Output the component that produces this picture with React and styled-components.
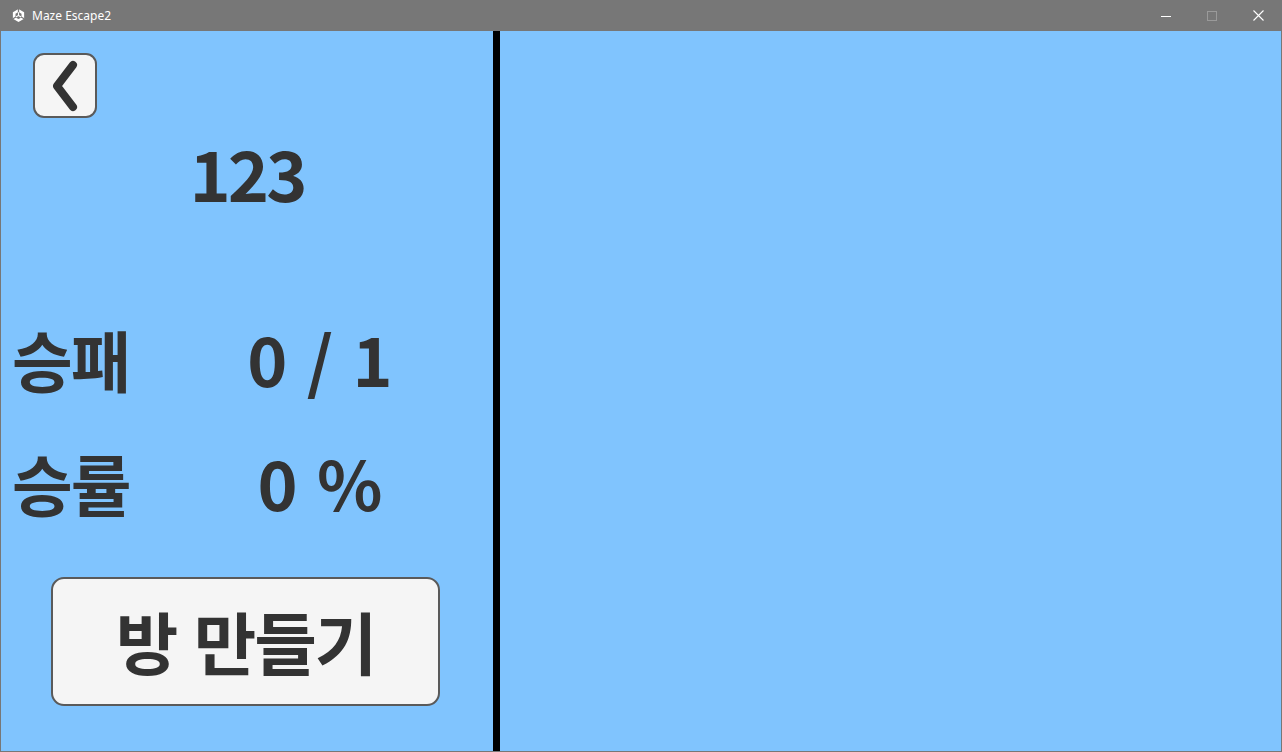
import React from 'react';
import styled, { createGlobalStyle } from 'styled-components';

const GlobalStyle = createGlobalStyle`
  html, body {
    margin: 0;
    padding: 0;
    width: 1282px;
    height: 752px;
    overflow: hidden;
  }
  * { box-sizing: border-box; }
`;

const Window = styled.div`
  width: 1282px;
  height: 752px;
  display: flex;
  flex-direction: column;
  background: #777777;
  padding: 0 1px 1px 1px;
`;

const TitleBar = styled.div`
  height: 31px;
  flex-shrink: 0;
  display: flex;
  align-items: center;
  padding-left: 10px;
  color: #ffffff;
  font-family: "Noto Sans", "Liberation Sans", sans-serif;
  font-size: 12px;
`;

const TitleText = styled.span`
  margin-left: 6px;
  flex: 1;
`;

const Controls = styled.div`
  display: flex;
  height: 100%;
`;

const ControlButton = styled.div`
  width: 46px;
  height: 100%;
  display: flex;
  align-items: center;
  justify-content: center;
`;

const Content = styled.div`
  flex: 1;
  min-height: 0;
  display: flex;
  background: #80c4fe;
`;

const LeftPanel = styled.div`
  width: 492px;
  display: flex;
  flex-direction: column;
  padding-top: 22px;
  color: #333333;
  font-family: "Noto Sans CJK KR", "Noto Sans", sans-serif;
  font-weight: 700;
  & > * { flex-shrink: 0; }
`;

const Divider = styled.div`
  width: 7px;
  background: #000000;
`;

const RightPanel = styled.div`
  flex: 1;
`;

const BackButton = styled.div`
  width: 64px;
  height: 65px;
  margin-left: 32px;
  border: 2px solid #5a5a5a;
  border-radius: 11px;
  background: #f5f5f5;
  display: flex;
  align-items: center;
  justify-content: center;
`;

const Score = styled.div`
  margin-top: 14px;
  height: 80px;
  line-height: 80px;
  font-size: 70px;
  letter-spacing: -3px;
  text-align: center;
`;

const StatRow = styled.div`
  display: grid;
  grid-template-columns: 139px 338px;
  align-items: center;
  height: 80px;
  padding-left: 11px;
  margin-top: ${p => p.$gap}px;
`;

const Label = styled.div`
  font-size: 66px;
  line-height: 80px;
  letter-spacing: -2px;
`;

const Value = styled.div`
  font-size: 68px;
  line-height: 80px;
  text-align: center;
  white-space: pre;
  word-spacing: 4px;
`;

const CreateButton = styled.div`
  width: 389px;
  height: 129px;
  margin-top: 55px;
  margin-left: 50px;
  border: 2px solid #5a5a5a;
  border-radius: 13px;
  background: #f5f5f5;
  display: flex;
  align-items: center;
  justify-content: center;
  font-size: 68px;
  letter-spacing: -2px;
  word-spacing: 4px;
  padding-bottom: 2px;
`;

function UnityLogo() {
  return (
    <svg width="15" height="15" viewBox="0 0 16 16">
      <path d="M8 1 L14 4.5 L14 11.5 L8 15 L2 11.5 L2 4.5 Z" fill="#ffffff" />
      <path d="M8 4.2 L11.2 6 L11.2 10 L8 11.8 L4.8 10 L4.8 6 Z" fill="#777777" />
      <path d="M8 8 L8 1 M8 8 L2 11.5 M8 8 L14 11.5" stroke="#777777" strokeWidth="1.4" />
      <path d="M8 4.6 L8 8 L5.2 9.6 M8 8 L10.8 9.6" stroke="#ffffff" strokeWidth="1.2" fill="none" />
    </svg>
  );
}

export default function App() {
  return (
    <>
      <GlobalStyle />
      <Window>
        <TitleBar>
          <UnityLogo />
          <TitleText>Maze Escape2</TitleText>
          <Controls>
            <ControlButton>
              <svg width="10" height="10" viewBox="0 0 10 10">
                <path d="M0 5.5 H10" stroke="#ffffff" strokeWidth="1" />
              </svg>
            </ControlButton>
            <ControlButton>
              <svg width="10" height="10" viewBox="0 0 10 10">
                <rect x="0.5" y="0.5" width="9" height="9" fill="none" stroke="#9a9a9a" strokeWidth="1" />
              </svg>
            </ControlButton>
            <ControlButton>
              <svg width="11" height="11" viewBox="0 0 11 11">
                <path d="M0.5 0.5 L10.5 10.5 M10.5 0.5 L0.5 10.5" stroke="#ffffff" strokeWidth="1.1" />
              </svg>
            </ControlButton>
          </Controls>
        </TitleBar>
        <Content>
          <LeftPanel>
            <BackButton>
              <svg width="30" height="52" viewBox="0 0 30 52">
                <path d="M23 5 L7 26 L23 47" stroke="#333333" strokeWidth="8" strokeLinecap="round" strokeLinejoin="round" fill="none" />
              </svg>
            </BackButton>
            <Score>123</Score>
            <StatRow $gap={106}>
              <Label>승패</Label>
              <Value>0 / 1</Value>
            </StatRow>
            <StatRow $gap={44}>
              <Label>승률</Label>
              <Value>0 %</Value>
            </StatRow>
            <CreateButton>방 만들기</CreateButton>
          </LeftPanel>
          <Divider />
          <RightPanel />
        </Content>
      </Window>
    </>
  );
}
